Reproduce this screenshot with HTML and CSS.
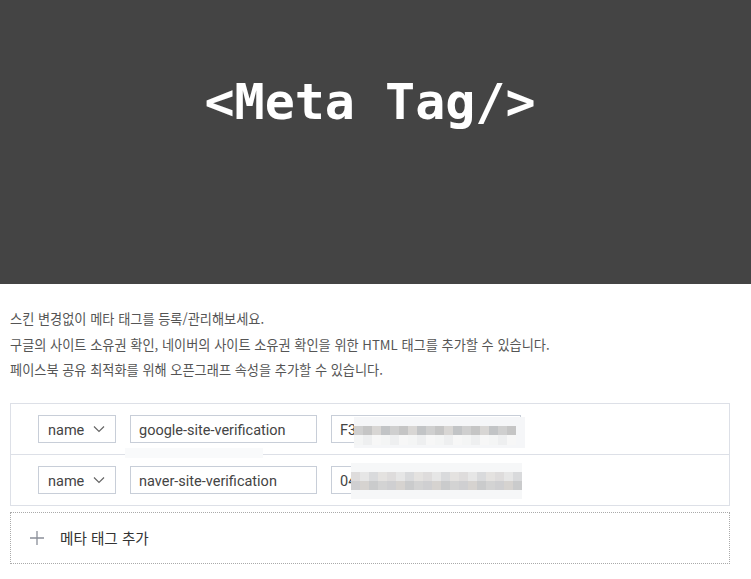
FILE: index.html
```html
<!DOCTYPE html>
<html lang="ko">

<head>
    <meta charset="UTF-8">
    <meta name="viewport" content="width=device-width, initial-scale=1.0">
    <title>Meta Tag</title>
    <link rel="stylesheet" href="styles.css">
</head>

<body>
    <!-- 상단 배너 -->
    <div class="banner">
        <h1 class="banner-title">&lt;Meta Tag/&gt;</h1>
    </div>

    <div class="content">
        <!-- 안내 문구 -->
        <ul class="desc">
            <li>스킨 변경없이 메타 태그를 등록/관리해보세요.</li>
            <li>구글의 사이트 소유권 확인, 네이버의 사이트 소유권 확인을 위한 HTML 태그를 추가할 수 있습니다.</li>
            <li>페이스북 공유 최적화를 위해 오픈그래프 속성을 추가할 수 있습니다.</li>
        </ul>

        <!-- 메타 태그 목록 -->
        <div class="tag-list">
            <div class="tag-row">
                <div class="select">
                    <span>name</span>
                    <svg width="12" height="8" viewBox="0 0 12 8"><path d="M1 1.5 6 6.5 11 1.5" fill="none" stroke="#666" stroke-width="1.2"/></svg>
                </div>
                <div class="field field-name">google-site-verification</div>
                <div class="field field-content">F3</div>
                <div class="mosaic mosaic-a"></div>
                <div class="mosaic mosaic-c"></div>
            </div>
            <div class="tag-row">
                <div class="select">
                    <span>name</span>
                    <svg width="12" height="8" viewBox="0 0 12 8"><path d="M1 1.5 6 6.5 11 1.5" fill="none" stroke="#666" stroke-width="1.2"/></svg>
                </div>
                <div class="field field-name">naver-site-verification</div>
                <div class="field field-content">04</div>
                <div class="mosaic mosaic-b"></div>
            </div>
        </div>

        <!-- 추가 버튼 -->
        <a href="javascript:;" class="add-btn">
            <svg width="14" height="14" viewBox="0 0 14 14"><path d="M7 0V14M0 7H14" stroke="#8a8f99" stroke-width="1.3"/></svg>
            <span>메타 태그 추가</span>
        </a>
    </div>
</body>

</html>
```

FILE: styles.css
```css
* {
    margin: 0;
    padding: 0;
    box-sizing: border-box;
}

body {
    font-family: "Noto Sans CJK KR", "Noto Sans", sans-serif;
    color: #555;
    background: #fff;
}

.banner {
    height: 284px;
    background-color: #444;
    display: flex;
    align-items: center;
    justify-content: center;
    padding-right: 11px;
}

.banner-title {
    font-family: "DejaVu Sans Mono", monospace;
    font-size: 50px;
    font-weight: bold;
    color: #fff;
    margin-top: -80px;
}

.content {
    width: 730px;
    padding-left: 10px;
}

.desc {
    list-style: none;
    padding-top: 22px;
    font-size: 13.2px;
    line-height: 25.5px;
    color: #555;
}

.tag-list {
    margin-top: 20px;
    border: 1px solid #dde0e7;
}

.tag-row {
    height: 50px;
    display: flex;
    align-items: center;
    padding-left: 27px;
    gap: 14px;
    position: relative;
}

.tag-row + .tag-row {
    border-top: 1px solid #dde0e7;
    height: 51px;
}

.select {
    width: 78px;
    height: 28px;
    border: 1px solid #c8ced8;
    display: flex;
    align-items: center;
    justify-content: space-between;
    padding: 3px 10px 0 9px;
    font-family: Roboto, "Noto Sans", sans-serif;
    font-size: 14.5px;
    color: #444;
}

.select svg {
    margin-top: -2px;
}

.field {
    height: 28px;
    border: 1px solid #c8ced8;
    padding: 3px 8px 0;
    display: flex;
    align-items: center;
    font-family: Roboto, "Noto Sans", sans-serif;
    font-size: 14.5px;
    color: #444;
}

.field-name {
    width: 187px;
}

.field-content {
    width: 190px;
}

/* 값 가림 처리 */
.mosaic {
    position: absolute;
    background-color: #f5f6f8;
}

.mosaic-a {
    left: 343px;
    top: 13px;
    width: 171px;
    height: 31px;
    background:
        repeating-linear-gradient(to right, #cfcfcf 0 9px, #c5c5c5 9px 18px, #d8d6d4 18px 27px, #c2c4c6 27px 36px) 0 9px / 162px 9px no-repeat,
        repeating-linear-gradient(to right, #f4f5f5 0 9px, #eeeff0 9px 18px, #f7f7f7 18px 27px) 0 18px / 162px 10px no-repeat,
        #f5f6f8;
}

.mosaic-b {
    left: 340px;
    top: 8px;
    width: 171px;
    height: 36px;
    background:
        repeating-linear-gradient(to right, #dedcdc 0 9px, #e6e6e6 9px 18px, #d9dadc 18px 27px, #e4e2e0 27px 36px) 0 9px / 171px 9px no-repeat,
        repeating-linear-gradient(to right, #cfcfd1 0 9px, #d6d3d0 9px 18px, #cacbcc 18px 27px, #d3d3d3 27px 36px) 0 18px / 171px 9px no-repeat,
        #f6f7f8;
}

.mosaic-c {
    left: 114px;
    top: 44px;
    width: 138px;
    height: 10px;
    background-color: #f9fafb;
    z-index: 1;
}

.add-btn {
    margin-top: 6px;
    height: 52px;
    border: 1px dotted #aaa;
    display: flex;
    align-items: center;
    padding-left: 19px;
    gap: 16px;
    text-decoration: none;
    font-size: 14.6px;
    color: #333;
}
```
